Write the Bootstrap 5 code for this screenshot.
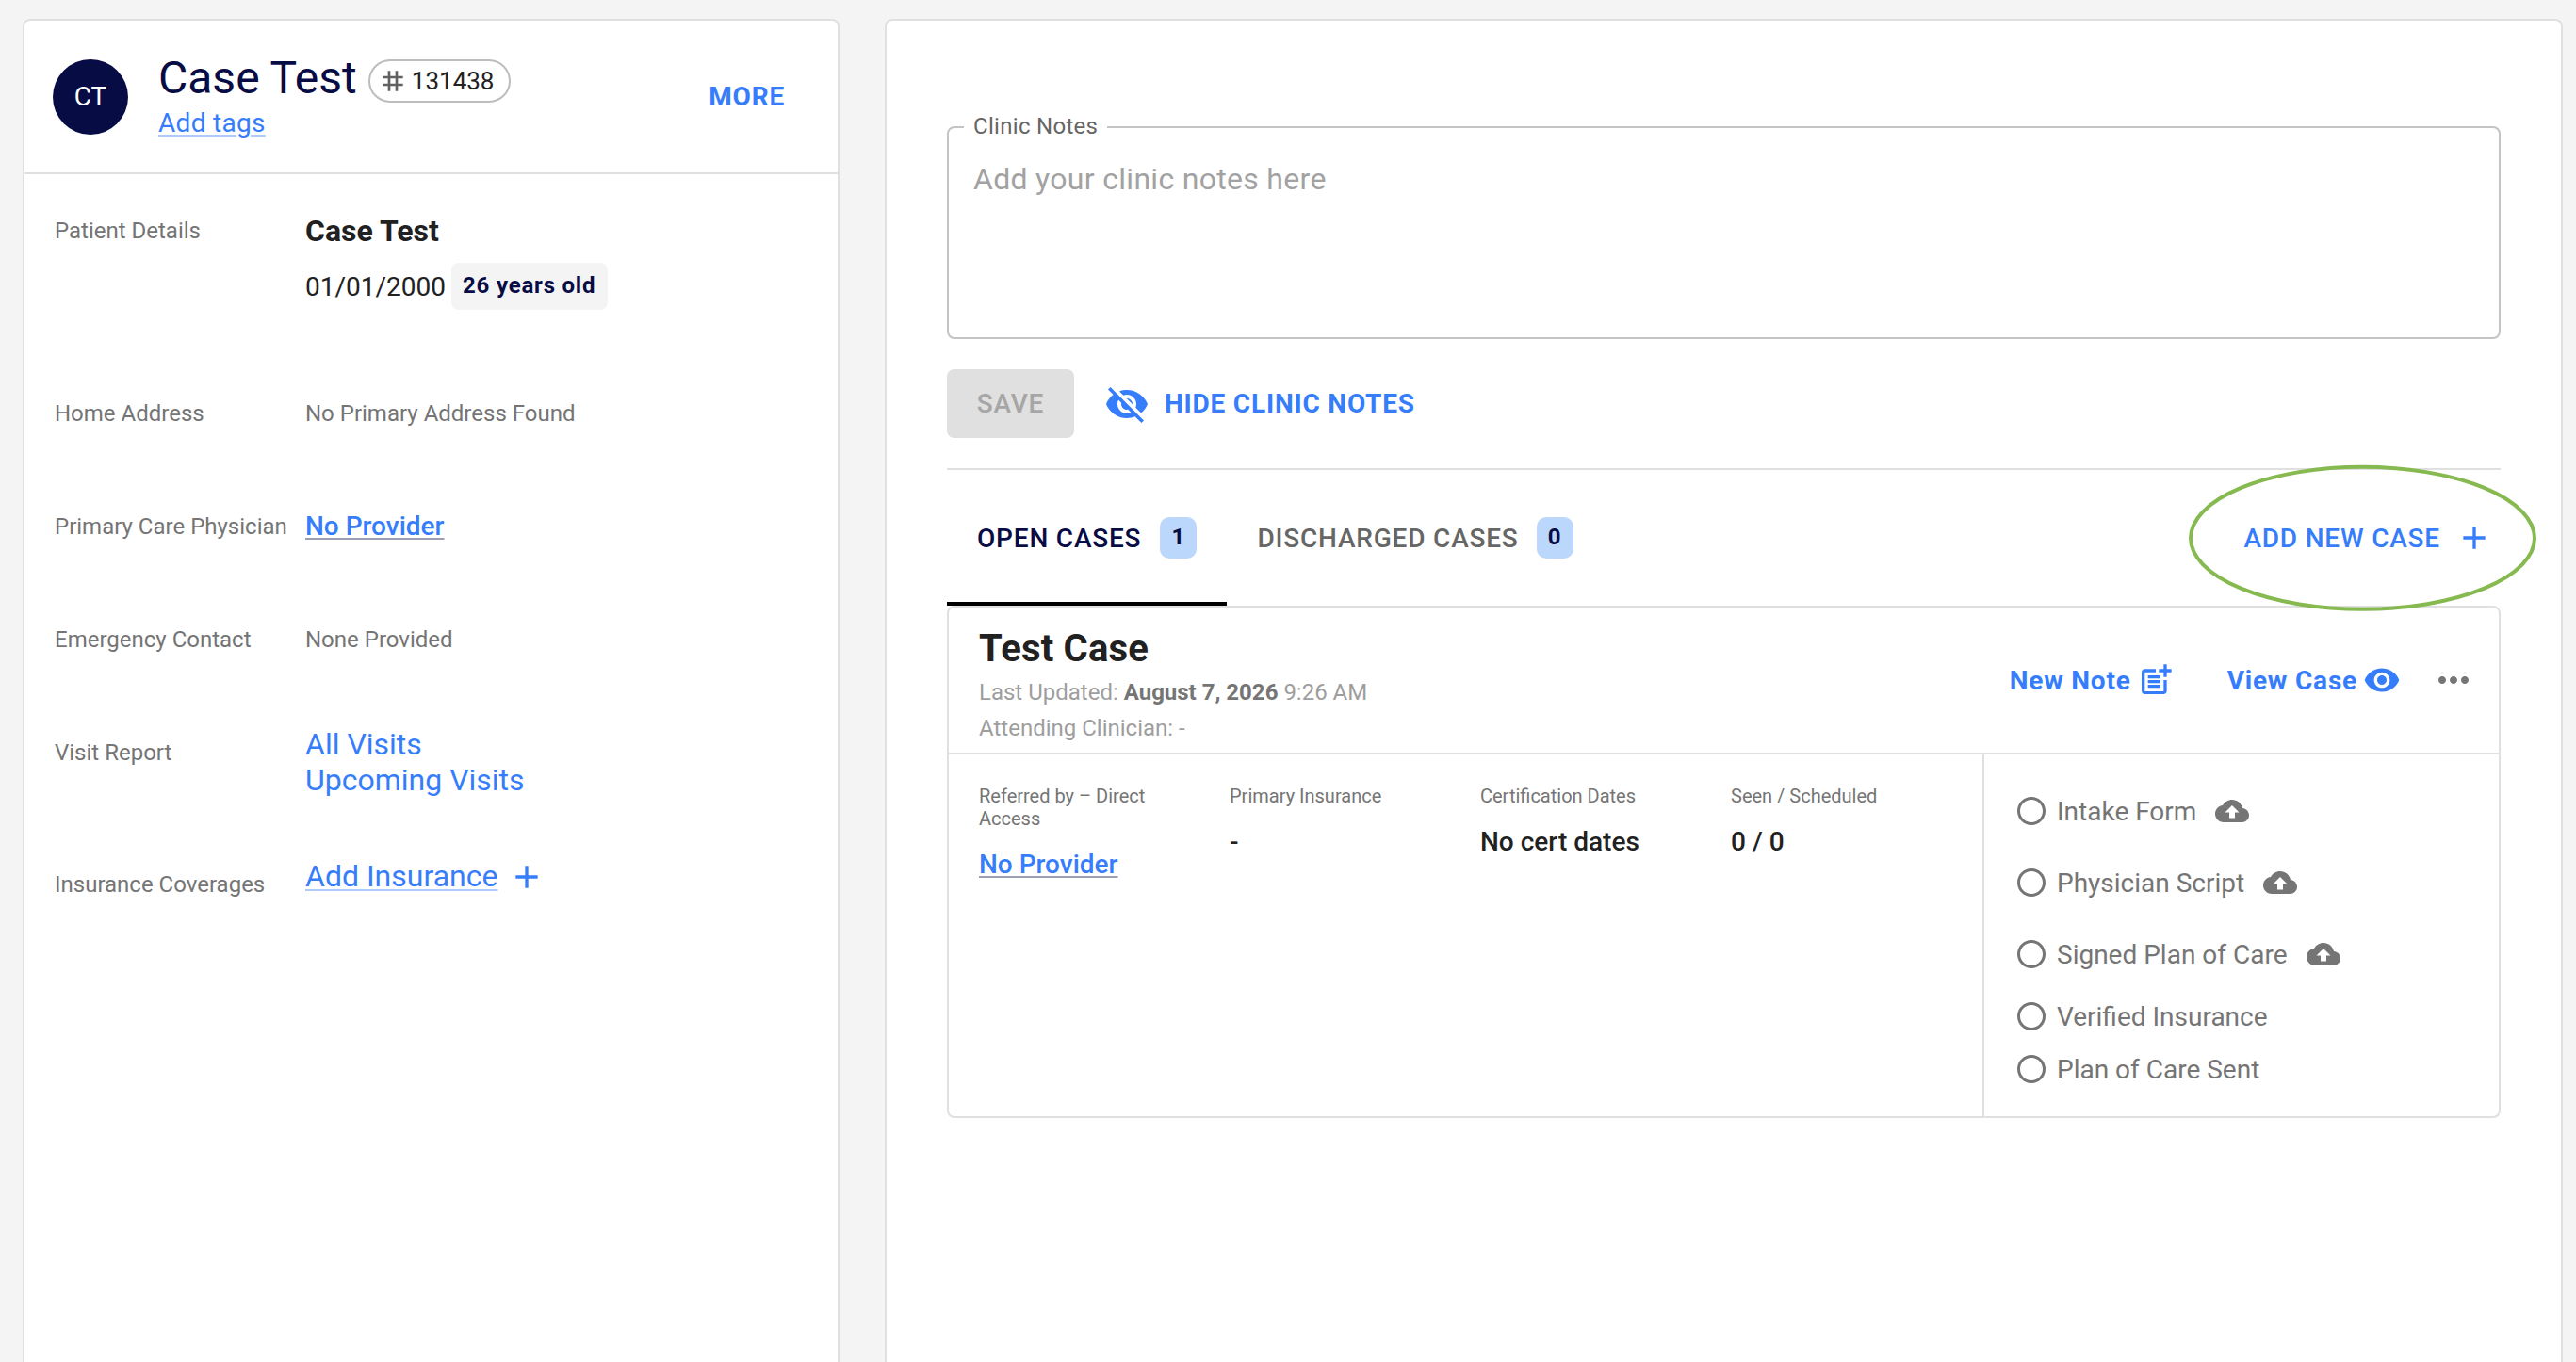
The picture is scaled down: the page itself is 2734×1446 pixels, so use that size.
<!DOCTYPE html>
<html lang="en">
<head>
<meta charset="utf-8">
<meta name="viewport" content="width=device-width, initial-scale=1">
<title>Case Test - Patient</title>
<link href="https://cdn.jsdelivr.net/npm/bootstrap@5.3.0/dist/css/bootstrap.min.css" rel="stylesheet">
<style>
:root{--navy:#080c45;--link:#367dfc;--line:#e0e0e0;--ink:#212121;--muted:#757575}
body{font-family:Roboto,"Liberation Sans",sans-serif;background:#f4f4f4;color:var(--ink);font-size:28px;line-height:33px}
a{color:var(--link);text-decoration:none}
svg{display:block;flex:none;fill:currentColor}
.page{height:1446px;padding:20px 14px 0 24px;gap:48px}
.panel{background:#fff;border:2px solid var(--line);border-bottom:0;border-radius:8px 8px 0 0}
.panel-patient{width:867px}
.w-500{font-weight:500}
.lh-tight{line-height:32px}
.ls-btn{letter-spacing:.8px}
.ls-field{letter-spacing:.3px}
.action{color:var(--link)}
.uline{text-decoration:underline;text-decoration-color:#afcbfe;text-decoration-thickness:2px;text-underline-offset:3px}
.uline-navy{text-decoration:underline;text-decoration-color:#9c9eb5;text-decoration-thickness:2px;text-underline-offset:3px}

/* Patient panel */
.patient-head{height:163px;padding:33px 56px 0 30px;border-bottom:2px solid var(--line)}
.avatar{width:80px;height:80px;margin-top:8px;background:var(--navy);color:#fff}
.patient-name{font-size:48px;line-height:56px;color:var(--navy)}
.patient-id{height:46px;margin:8px 0 0 12px;padding:0 16px 0 8px;gap:4px;border:2px solid #bdbdbd;font-size:26px}
.patient-id svg{color:#616161}
.tags-link{line-height:38px;margin-top:1px}
.patient-body{padding:32px 32px 0}
.detail{height:120px}
.detail-tall{height:194px}
.detail-visits{height:140px}
.detail-label{width:266px;margin-top:14px;font-size:24px;line-height:28px;color:var(--muted);white-space:nowrap}
.detail-text{margin-top:14px;font-size:24px;line-height:28px;color:var(--muted)}
.detail-name{font-size:32px;line-height:36px;margin:10px 0 16px}
.age-tag{height:50px;margin-left:6px;padding:0 13px 2px 12px;border-radius:8px;background:#f4f4f4;color:var(--navy);font-size:24px;letter-spacing:.8px}
.big-link{font-size:32px;line-height:38px}
.big-link svg{margin-left:11px}

/* Cases panel */
.panel-cases{padding:112px 64px 0}
.notes-field{font-size:32px;line-height:46px;height:226px;padding:31px 26px;border:2px solid #c4c4c4;border-radius:8px;resize:none;color:var(--ink)}
.notes-field::placeholder{color:#a2a2a2;opacity:1}
.notes-label{left:18px;top:-14px;padding:0 10px;background:#fff;color:#666;font-size:24px;line-height:28px}
.save-btn{width:135px;height:73px;border-radius:8px;background:#e0e0e0;color:#a6a6a6}
.notes-actions{margin:32px 0;gap:32px}
.case-tabs{height:146px;border-top:2px solid var(--line)}
.case-tab{padding:0 32px;gap:20px;color:#666}
.case-tab+.case-tab{gap:19px}
.case-tab.active{color:var(--navy);box-shadow:inset 0 -4px #000}
.count{width:39px;height:44px;border-radius:10px;background:#bbd7fc;color:var(--navy);font-size:24px;padding-bottom:2px}
.add-case{gap:16px;margin-right:8px}
.callout{left:2323px;top:493px;color:#86b950;z-index:3}
.case-box{border:2px solid var(--line);border-radius:8px}
.case-head{height:156px;padding:0 24px 0 32px;border-bottom:2px solid var(--line)}
.case-intro{padding-top:13px}
.case-title{font-size:40px;line-height:48px;margin:0 0 3px;letter-spacing:.2px}
.case-meta{font-size:24px;line-height:38px;color:#9e9e9e}
.case-meta b{color:var(--muted)}
.case-action{gap:6px}
.case-menu{color:var(--muted);margin-left:32px}
.case-body{height:384px}
.case-facts{padding:32px 0 0 32px}
.fact{width:266px;padding-right:60px}
.fact-label{font-size:20px;line-height:24px;color:var(--muted);margin-bottom:20px}
.checklist{width:548px;padding:22px 0 22px 32px;border-left:2px solid var(--line);color:var(--muted)}
.check-item{height:56px;gap:9px}
.check-upload{height:76px}
.upload{margin-left:11px}
</style>
<script src="https://cdn.jsdelivr.net/npm/bootstrap@5.3.0/dist/js/bootstrap.bundle.min.js"></script>
</head>
<body>
<svg class="d-none">
  <symbol id="i-add" viewBox="0 0 24 24"><path d="M19 13h-6v6h-2v-6H5v-2h6V5h2v6h6v2z"/></symbol>
  <symbol id="i-ring" viewBox="0 0 24 24"><path d="M12 2C6.48 2 2 6.48 2 12s4.48 10 10 10 10-4.48 10-10S17.52 2 12 2zm0 18c-4.42 0-8-3.58-8-8s3.58-8 8-8 8 3.58 8 8-3.58 8-8 8z"/></symbol>
  <symbol id="i-cloud" viewBox="0 0 24 24"><path d="M19.35 10.04C18.67 6.59 15.64 4 12 4 9.11 4 6.6 5.64 5.35 8.04 2.34 8.36 0 10.91 0 14c0 3.31 2.69 6 6 6h13c2.76 0 5-2.24 5-5 0-2.64-2.05-4.78-4.65-4.96zM14 13v4h-4v-4H7l5-5 5 5h-3z"/></symbol>
</svg>

<div class="page d-flex overflow-hidden">
  <aside class="panel panel-patient flex-shrink-0">
    <header class="patient-head d-flex align-items-start">
      <div class="avatar lh-tight rounded-circle d-flex align-items-center justify-content-center">CT</div>
      <div class="ms-4 ps-2">
        <div class="d-flex align-items-start">
          <div class="patient-name">Case Test</div>
          <div class="patient-id lh-tight rounded-pill d-flex align-items-center">
            <svg width="32" height="32" viewBox="0 0 24 24"><path d="M20 10V8h-4V4h-2v4h-4V4H8v4H4v2h4v4H4v2h4v4h2v-4h4v4h2v-4h4v-2h-4v-4h4zm-6 4h-4v-4h4v4z"/></svg>
            <span>131438</span>
          </div>
        </div>
        <a href="#" class="tags-link uline ls-field d-inline-block">Add tags</a>
      </div>
      <a href="#" class="lh-tight ms-auto mt-4 pt-2 fw-bold ls-btn">MORE</a>
    </header>
    <div class="patient-body">
      <div class="detail detail-tall d-flex">
        <div class="detail-label">Patient Details</div>
        <div>
          <div class="detail-name fw-bold">Case Test</div>
          <div class="d-flex align-items-center"><span>01/01/2000</span><span class="age-tag lh-tight fw-bold d-flex align-items-center">26 years old</span></div>
        </div>
      </div>
      <div class="detail d-flex"><div class="detail-label">Home Address</div><div class="detail-text">No Primary Address Found</div></div>
      <div class="detail d-flex"><div class="detail-label">Primary Care Physician</div><div class="lh-tight pt-2 mt-1"><a href="#" class="uline-navy w-500">No Provider</a></div></div>
      <div class="detail d-flex"><div class="detail-label">Emergency Contact</div><div class="detail-text">None Provided</div></div>
      <div class="detail detail-visits d-flex"><div class="detail-label">Visit Report</div><div class="big-link d-flex flex-column"><a href="#">All Visits</a><a href="#">Upcoming Visits</a></div></div>
      <div class="detail d-flex"><div class="detail-label">Insurance Coverages</div><div class="big-link d-flex align-items-start action"><a href="#" class="uline">Add Insurance</a><svg width="40" height="40"><use href="#i-add"/></svg></div></div>
    </div>
  </aside>

  <main class="panel panel-cases flex-grow-1">
    <div class="position-relative">
      <label for="notes" class="notes-label ls-field position-absolute">Clinic Notes</label>
      <textarea id="notes" class="notes-field form-control ls-field d-block" placeholder="Add your clinic notes here"></textarea>
    </div>
    <div class="notes-actions d-flex align-items-center">
      <div class="save-btn w-500 ls-btn d-flex align-items-center justify-content-center">SAVE</div>
      <a href="#" class="d-flex align-items-center fw-bold ls-btn">
        <svg width="48" height="48" viewBox="0 0 24 24"><path d="M12 7c2.76 0 5 2.24 5 5 0 .65-.13 1.26-.36 1.83l2.92 2.92c1.51-1.26 2.7-2.89 3.43-4.75-1.73-4.39-6-7.5-11-7.5-1.4 0-2.74.25-3.98.7l2.16 2.16C10.74 7.13 11.35 7 12 7zM2 4.27l2.28 2.28.46.46C3.08 8.3 1.78 10.02 1 12c1.73 4.39 6 7.5 11 7.5 1.55 0 3.03-.3 4.38-.84l.42.42L19.73 22 21 20.73 3.27 3 2 4.27zM7.53 9.8l1.55 1.55c-.05.21-.08.43-.08.65 0 1.66 1.34 3 3 3 .22 0 .44-.03.65-.08l1.55 1.55c-.67.33-1.41.53-2.2.53-2.76 0-5-2.24-5-5 0-.79.2-1.53.53-2.2zm4.31-.78l3.15 3.15.02-.16c0-1.66-1.34-3-3-3l-.17.01z"/></svg>
        <span class="ms-3">HIDE CLINIC NOTES</span>
      </a>
    </div>
    <div class="case-tabs w-500 d-flex align-items-stretch ls-btn">
      <div class="case-tab active d-flex align-items-center"><span>OPEN CASES</span><span class="count lh-tight fw-bold d-flex align-items-center justify-content-center">1</span></div>
      <div class="case-tab d-flex align-items-center"><span>DISCHARGED CASES</span><span class="count lh-tight fw-bold d-flex align-items-center justify-content-center">0</span></div>
      <a href="#" class="add-case ms-auto d-flex align-items-center"><span>ADD NEW CASE</span><svg width="40" height="40"><use href="#i-add"/></svg></a>
    </div>
    <section class="case-box">
      <header class="case-head d-flex align-items-center">
        <div class="case-intro me-auto">
          <h2 class="case-title fw-bold">Test Case</h2>
          <div class="case-meta">Last Updated: <b>August 7, 2026</b> 9:26 AM</div>
          <div class="case-meta">Attending Clinician: -</div>
        </div>
        <a href="#" class="case-action d-flex align-items-center fw-bold ls-btn me-5">
          <span>New Note</span>
          <svg width="40" height="40" viewBox="0 0 24 24"><path d="M17 19.22H5V7h7V5H5c-1.100 0-2 .9-2 2v12c0 1.100.9 2 2 2h12c1.100 0 2-.9 2-2v-7h-2v7.220z"/><path d="M19 2h-2v3h-3c.01.010 0 2 0 2h3v2.990c.010.010 2 0 2 0V7h3V5h-3V2zM7 9h8v2H7zM7 12v2h8v-2h-3zM7 15h8v2H7z"/></svg>
        </a>
        <a href="#" class="case-action d-flex align-items-center fw-bold ls-btn ms-2">
          <span>View Case</span>
          <svg width="40" height="40" viewBox="0 0 24 24"><path d="M12 4.500C7 4.500 2.730 7.610 1 12c1.730 4.390 6 7.500 11 7.500s9.270-3.110 11-7.500c-1.730-4.390-6-7.500-11-7.500zM12 17c-2.760 0-5-2.240-5-5s2.240-5 5-5 5 2.240 5 5-2.240 5-5 5zm0-8c-1.660 0-3 1.340-3 3s1.340 3 3 3 3-1.340 3-3-1.340-3-3-3z"/></svg>
        </a>
        <svg class="case-menu" width="48" height="48" viewBox="0 0 24 24"><path d="M6 10c-1.100 0-2 .9-2 2s.9 2 2 2 2-.9 2-2-.9-2-2-2zm12 0c-1.100 0-2 .9-2 2s.9 2 2 2 2-.9 2-2-.9-2-2-2zm-6 0c-1.100 0-2 .9-2 2s.9 2 2 2 2-.9 2-2-.9-2-2-2z"/></svg>
      </header>
      <div class="case-body d-flex">
        <div class="case-facts w-500 d-flex flex-grow-1">
          <div class="fact"><div class="fact-label fw-normal">Referred by – Direct Access</div><a href="#" class="uline-navy">No Provider</a></div>
          <div class="fact"><div class="fact-label fw-normal">Primary Insurance</div>-</div>
          <div class="fact"><div class="fact-label fw-normal">Certification Dates</div><span class="text-nowrap">No cert dates</span></div>
          <div class="fact"><div class="fact-label fw-normal">Seen / Scheduled</div>0 / 0</div>
        </div>
        <div class="checklist flex-shrink-0">
          <div class="check-item check-upload d-flex align-items-center"><svg width="36" height="36"><use href="#i-ring"/></svg><span>Intake Form</span><svg class="upload" width="36" height="36"><use href="#i-cloud"/></svg></div>
          <div class="check-item check-upload d-flex align-items-center"><svg width="36" height="36"><use href="#i-ring"/></svg><span>Physician Script</span><svg class="upload" width="36" height="36"><use href="#i-cloud"/></svg></div>
          <div class="check-item check-upload d-flex align-items-center"><svg width="36" height="36"><use href="#i-ring"/></svg><span>Signed Plan of Care</span><svg class="upload" width="36" height="36"><use href="#i-cloud"/></svg></div>
          <div class="check-item d-flex align-items-center"><svg width="36" height="36"><use href="#i-ring"/></svg><span>Verified Insurance</span></div>
          <div class="check-item d-flex align-items-center"><svg width="36" height="36"><use href="#i-ring"/></svg><span>Plan of Care Sent</span></div>
        </div>
      </div>
    </section>
  </main>
</div>
<svg class="callout position-absolute" width="370" height="156" viewBox="0 0 370 156"><ellipse cx="184.500" cy="78.300" rx="182.500" ry="75.500" fill="none" stroke="currentColor" stroke-width="4"/></svg>
</body>
</html>
